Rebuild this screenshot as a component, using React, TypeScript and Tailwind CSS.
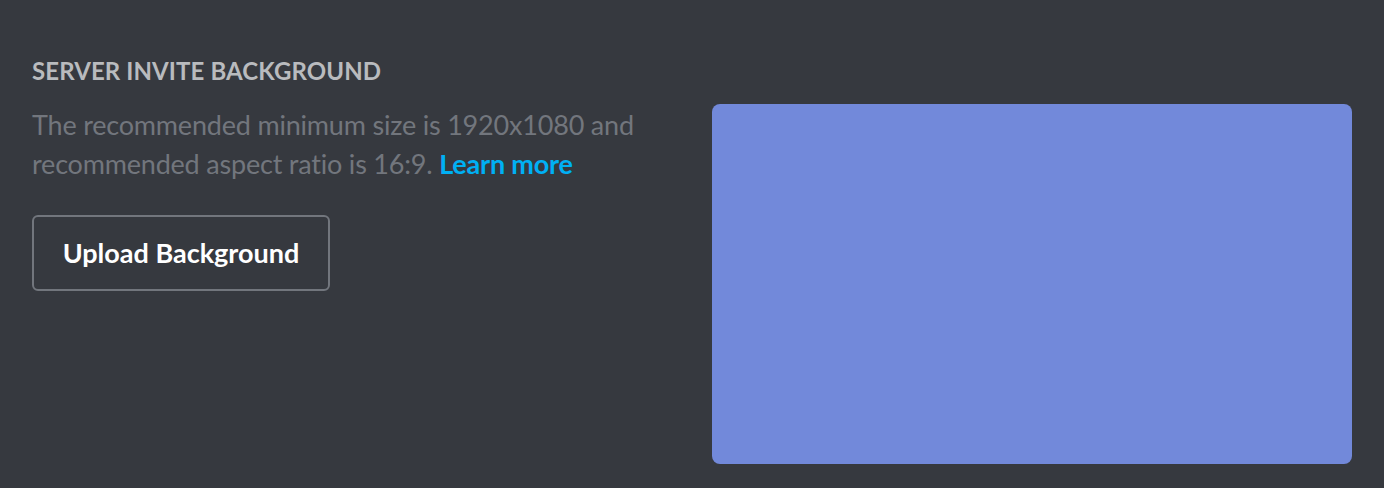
import React from "react";

export default function App() {
  return (
    <div
      className="w-[1384px] h-[488px] bg-[#36393f] flex pl-[32px] pt-[55px] gap-[32px] overflow-hidden"
      style={{ fontFamily: 'Lato, "Noto Sans", sans-serif' }}
    >
      <div className="w-[648px] flex flex-col">
        <h2 className="text-[24px] leading-[32px] font-bold uppercase text-[#b9bbbe] tracking-[0.1px]">
          Server Invite Background
        </h2>
        <p className="mt-[18px] text-[27px] leading-[39px] text-[#72767d] tracking-[-0.2px]">
          The recommended minimum size is 1920x1080 and<br />recommended aspect ratio is 16:9.{" "}
          <span className="text-[#00b0f4] font-bold">Learn more</span>
        </p>
        <div className="mt-[32px]">
          <button className="w-[298px] h-[76px] rounded-[6px] border-2 border-[#72767d] text-white text-[27px] font-bold">
            Upload Background
          </button>
        </div>
      </div>
      <div className="mt-[49px] w-[640px] h-[360px] rounded-[8px] bg-[#7289da]" />
    </div>
  );
}
